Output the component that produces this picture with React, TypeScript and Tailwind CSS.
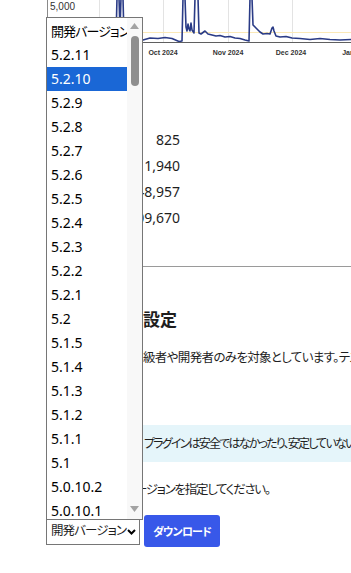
import React from "react";

const versions = [
  "5.2.11","5.2.10","5.2.9","5.2.8","5.2.7","5.2.6","5.2.5","5.2.4","5.2.3","5.2.2","5.2.1","5.2","5.1.5","5.1.4","5.1.3","5.1.2","5.1.1","5.1","5.0.10.2","5.0.10.1","5.0.10","5.0.9",
];

const linePts =
  "47,38 60,39 80,38 100,39 116,38 117,-2 119,-2 120,30 121,-2 123,-2 124,38 140,39 143,40 150,38 158,38.5 165,37.5 172,38.5 179,41.5 182,41 183,-2 185,-2 186,27 187,31 188,24 189,29 190,31 191,23 192,30 194,33 195,-2 198,-2 199,33 201,34 203,32.5 205,31 208,34 212,35 216,36 220,35.5 225,37 230,36.5 235,38 240,38.5 245,40 249,41 250,-2 252,-2 253,25 256,28 260,32 263,34 267,33.5 270,34 272,28 273,27 274,31 276,36 280,37 286,36.5 292,38 300,38.5 310,39.5 320,38.5 330,39.5 340,40 351,39.5";

export default function App() {
  return (
    <div className="relative w-[351px] h-[573px] overflow-hidden bg-white text-[#1e1e1e] font-['Noto_Sans','Noto_Sans_CJK_JP',sans-serif] [font-feature-settings:'palt'] whitespace-nowrap">
      <div className="pl-[46px]">
        {/* chart */}
        <svg width="305" height="58" viewBox="46 0 305 58" className="block">
          {[99, 163, 228, 292].map((x) => (
            <line key={x} x1={x + 0.5} y1="0" x2={x + 0.5} y2="42" stroke="#e3e3e3" strokeWidth="1" />
          ))}
          <line x1="47.5" y1="0" x2="47.5" y2="42" stroke="#8a8a8a" strokeWidth="1" />
          <line x1="47" y1="32.5" x2="351" y2="32.5" stroke="#fbe9b7" strokeWidth="1" />
          <polyline points={linePts} fill="none" stroke="#2a3b86" strokeWidth="1.6" strokeLinejoin="round" />
          <line x1="47" y1="42.5" x2="351" y2="42.5" stroke="#5f5f5f" strokeWidth="1" />
          <text x="50" y="10" fontSize="10" fill="#333" fontFamily="Liberation Sans, Arial, sans-serif">5,000</text>
          {[
            ["Oct 2024", 163],
            ["Nov 2024", 228],
            ["Dec 2024", 291],
            ["Jan 2025", 357],
          ].map(([t, x]) => (
            <text key={t as string} x={x as number} y="55" fontSize="7" fontWeight="bold" textAnchor="middle" fill="#333" fontFamily="Liberation Sans, Arial, sans-serif">
              {t}
            </text>
          ))}
        </svg>

        <div className="h-[69px]" />

        {/* stats table */}
        <div className="w-[134px] text-[14px] text-right">
          {["825", "1,940", "148,957", "1,209,670"].map((n) => (
            <div key={n} className="h-[26px] flex items-center justify-end leading-none">
              {n}
            </div>
          ))}
        </div>

        <div className="h-[35px]" />
        <div className="border-t border-[#9a9a9a] h-[40px]" />

        <div className="h-[26px] flex items-center pl-[97px] text-[17px] font-bold leading-none">設定</div>

        <div className="h-[16px]" />
        <div className="h-[20px] flex items-center pl-[97px] text-[12.5px] tracking-[-0.65px] leading-none">
          級者や開発者のみを対象としています。テストにのみ使用してください。
        </div>

        <div className="h-[57px]" />
        <div className="h-[37px] bg-[#e5f5fa] flex items-center pl-[98px] text-[12px] tracking-[-1.8px] leading-none">
          プラグインは安全ではなかったり、安定していない場合があります。
        </div>

        <div className="h-[18px]" />
        <div className="h-[20px] flex items-center pl-[89px] text-[12.5px] tracking-[-1.3px] leading-none">
          ージョンを指定してください。
        </div>

        <div className="h-[15px]" />
        <div className="flex items-start">
          <div className="mt-[3px] w-[94px] h-[27px] border border-[#767676] bg-white flex items-center justify-between pl-[4px] pr-[3px]">
            <span className="text-[12.5px] leading-none tracking-[-0.9px]">開発バージョン</span>
            <svg width="9" height="6" viewBox="0 0 9 6" className="block shrink-0">
              <polyline points="1,1 4.5,4.5 8,1" fill="none" stroke="#000" strokeWidth="2" />
            </svg>
          </div>
          <div className="ml-[4px] w-[76px] h-[32px] rounded-[3px] bg-[#3858e9] text-white font-bold text-[11px] tracking-[-0.8px] flex items-center justify-center leading-none">
            ダウンロード
          </div>
        </div>
      </div>

      {/* open dropdown list */}
      <div className="absolute left-[46px] top-[17px] w-[97px] h-[503px] border border-[#767676] bg-white flex">
        <div className="w-[80px] pt-[1px] overflow-hidden">
          <div className="h-[24px] flex items-center pl-[4px] text-[13px] leading-none tracking-[-0.9px] text-black">開発バージョン</div>
          {versions.map((v) => (
            <div
              key={v}
              className={
                v === "5.2.10"
                  ? "h-[24px] flex items-center pl-[4px] text-[14px] leading-none bg-[#1a67d6] text-white"
                  : "h-[24px] flex items-center pl-[4px] text-[14px] leading-none text-black"
              }
            >
              {v}
            </div>
          ))}
        </div>
        <div className="w-[15px] bg-[#f8f8f8] flex flex-col items-center pt-[5px] pb-[7px]">
          <svg width="9" height="6" viewBox="0 0 9 6" className="block">
            <polygon points="4.5,0 9,6 0,6" fill="#a3a3a3" />
          </svg>
          <div className="mt-[7px] w-[8px] h-[50px] rounded-full bg-[#8f8f8f]" />
          <div className="flex-1" />
          <svg width="9" height="6" viewBox="0 0 9 6" className="block">
            <polygon points="0,0 9,0 4.5,6" fill="#a3a3a3" />
          </svg>
        </div>
      </div>
    </div>
  );
}
